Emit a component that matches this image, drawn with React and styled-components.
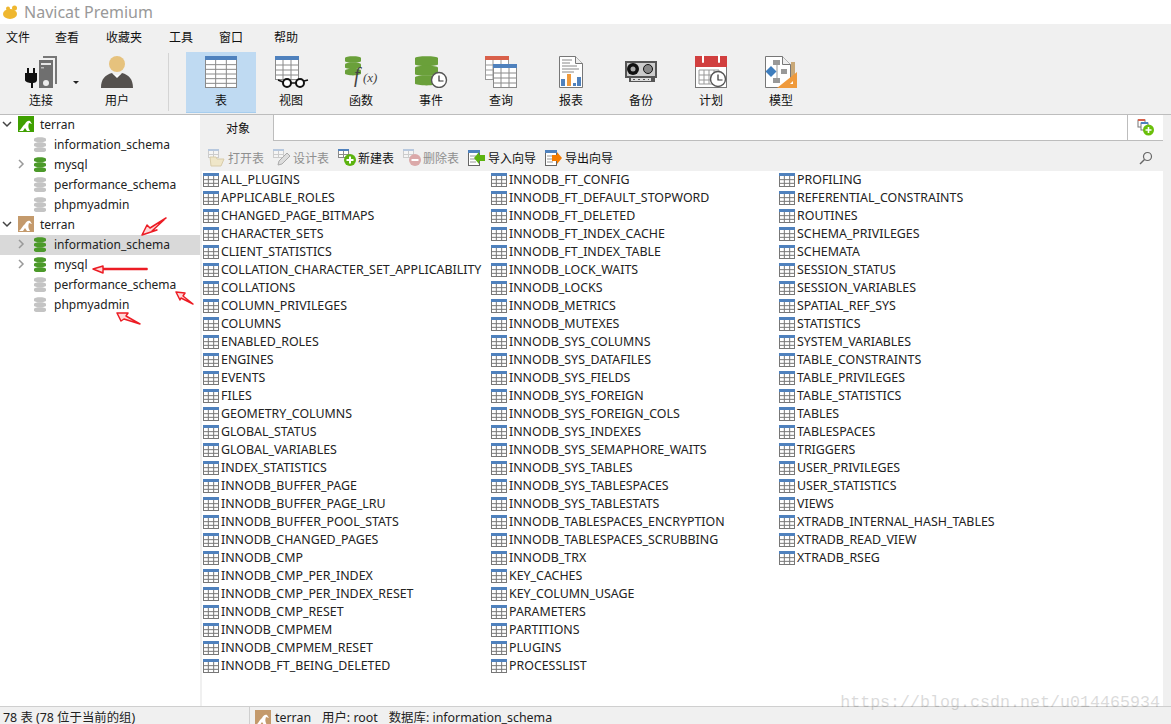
import React from 'react';
import styled, { createGlobalStyle } from 'styled-components';

const FONT = '"Noto Sans", "Noto Sans CJK SC", sans-serif';

const col1 = ['ALL_PLUGINS','APPLICABLE_ROLES','CHANGED_PAGE_BITMAPS','CHARACTER_SETS','CLIENT_STATISTICS','COLLATION_CHARACTER_SET_APPLICABILITY','COLLATIONS','COLUMN_PRIVILEGES','COLUMNS','ENABLED_ROLES','ENGINES','EVENTS','FILES','GEOMETRY_COLUMNS','GLOBAL_STATUS','GLOBAL_VARIABLES','INDEX_STATISTICS','INNODB_BUFFER_PAGE','INNODB_BUFFER_PAGE_LRU','INNODB_BUFFER_POOL_STATS','INNODB_CHANGED_PAGES','INNODB_CMP','INNODB_CMP_PER_INDEX','INNODB_CMP_PER_INDEX_RESET','INNODB_CMP_RESET','INNODB_CMPMEM','INNODB_CMPMEM_RESET','INNODB_FT_BEING_DELETED'];
const col2 = ['INNODB_FT_CONFIG','INNODB_FT_DEFAULT_STOPWORD','INNODB_FT_DELETED','INNODB_FT_INDEX_CACHE','INNODB_FT_INDEX_TABLE','INNODB_LOCK_WAITS','INNODB_LOCKS','INNODB_METRICS','INNODB_MUTEXES','INNODB_SYS_COLUMNS','INNODB_SYS_DATAFILES','INNODB_SYS_FIELDS','INNODB_SYS_FOREIGN','INNODB_SYS_FOREIGN_COLS','INNODB_SYS_INDEXES','INNODB_SYS_SEMAPHORE_WAITS','INNODB_SYS_TABLES','INNODB_SYS_TABLESPACES','INNODB_SYS_TABLESTATS','INNODB_TABLESPACES_ENCRYPTION','INNODB_TABLESPACES_SCRUBBING','INNODB_TRX','KEY_CACHES','KEY_COLUMN_USAGE','PARAMETERS','PARTITIONS','PLUGINS','PROCESSLIST'];
const col3 = ['PROFILING','REFERENTIAL_CONSTRAINTS','ROUTINES','SCHEMA_PRIVILEGES','SCHEMATA','SESSION_STATUS','SESSION_VARIABLES','SPATIAL_REF_SYS','STATISTICS','SYSTEM_VARIABLES','TABLE_CONSTRAINTS','TABLE_PRIVILEGES','TABLE_STATISTICS','TABLES','TABLESPACES','TRIGGERS','USER_PRIVILEGES','USER_STATISTICS','VIEWS','XTRADB_INTERNAL_HASH_TABLES','XTRADB_READ_VIEW','XTRADB_RSEG'];

const GlobalStyle = createGlobalStyle`
  html, body { margin: 0; padding: 0; background: #fff; }
  body { font-family: ${FONT}; font-size: 12px; color: #1a1a1a; overflow: hidden; }
`;

/* ---------- icons ---------- */

const Grid = ({ x, y, w, h, cols, rows, head = '#4f81bd', line = '#8a8a8a', headH = 4, fill = '#fff' }) => {
  const v = Array.from({ length: cols - 1 }, (_, i) => x + ((i + 1) * w) / cols);
  const hs = Array.from({ length: rows - 1 }, (_, i) => y + headH + ((i + 1) * (h - headH)) / rows);
  return (
    <g>
      <rect x={x + 0.5} y={y + 0.5} width={w - 1} height={h - 1} fill={fill} stroke={line} />
      <rect x={x} y={y} width={w} height={headH} fill={head} />
      {v.map((p) => <line key={p} x1={p} x2={p} y1={y + headH} y2={y + h} stroke={line} />)}
      {hs.map((p) => <line key={p} x1={x} x2={x + w} y1={p} y2={p} stroke={line} />)}
    </g>
  );
};

const Cylinder = ({ x, y, w, h, color }) => {
  const band = h / 3;
  return (
    <g fill={color}>
      {[0, 1, 2].map((i) => (
        <path
          key={i}
          d={`M${x} ${y + i * band + 2}c0-2.4 ${w}-2.4 ${w} 0v${band - 3.4}c0 2.4-${w} 2.4-${w} 0z`}
        />
      ))}
    </g>
  );
};

const Clock = ({ cx, cy, r }) => (
  <g>
    <circle cx={cx} cy={cy} r={r} fill="#fff" stroke="#555" strokeWidth="1.4" />
    <path d={`M${cx} ${cy - r + 3}V${cy + 1}H${cx + r - 3}`} fill="none" stroke="#333" strokeWidth="1.2" />
  </g>
);

const Big = ({ children }) => <svg width="36" height="36" viewBox="0 0 36 36">{children}</svg>;

const ConnectIcon = () => (
  <Big>
    <path d="M20 4h14v28h-2V6H20z" fill="#777" />
    <rect x="16" y="8" width="14" height="28" fill="#6f6f6f" />
    <rect x="18" y="11" width="10" height="2" fill="#e6e6e6" />
    <rect x="18" y="15" width="3" height="1.500" fill="#bbb" />
    <circle cx="23" cy="31" r="3" fill="#eee" />
    <path d="M4 16h2v5h4v-5h2v5h2v7c0 2-2 3-4 3v5H8v-5c-2 0-6-1-6-3v-7h2z" fill="#111" />
  </Big>
);

const UserIcon = () => (
  <Big>
    <circle cx="18" cy="12" r="8" fill="#e6c27d" />
    <path d="M2 36c0-9 4-13 11-15l5 4 5-4c7 2 11 6 11 15z" fill="#55514e" />
    <path d="M13 21l5 5 5-5-5 2.500z" fill="#fff" />
  </Big>
);

const TableBig = () => (
  <Big><Grid x={2} y={4} w={32} h={32} cols={3} rows={6} headH={4} /></Big>
);

const ViewIcon = () => (
  <Big>
    <Grid x={2} y={4} w={24} h={24} cols={3} rows={4} headH={4} />
    <circle cx="14" cy="31" r="4" fill="#fff" stroke="#111" strokeWidth="2" />
    <circle cx="27" cy="31" r="4" fill="#fff" stroke="#111" strokeWidth="2" />
    <path d="M5 28l5 2M18 31h5M31 29l4-1" stroke="#111" strokeWidth="1.500" />
  </Big>
);

const FuncIcon = () => (
  <Big>
    <Cylinder x={2} y={4} w={16} h={19} color="#6aa03a" />
    <text x="11" y="30" fontFamily="Liberation Serif, serif" fontStyle="italic" fontSize="20" fill="#444">f</text>
    <text x="20" y="30" fontFamily="Liberation Serif, serif" fontStyle="italic" fontSize="13" fill="#444">(x)</text>
  </Big>
);

const EventIcon = () => (
  <Big>
    <Cylinder x={2} y={4} w={23} h={29} color="#6aa03a" />
    <Clock cx={26} cy={28} r={7.500} />
  </Big>
);

const QueryIcon = () => (
  <Big>
    <Grid x={2} y={4} w={24} h={24} cols={3} rows={4} head="#d9604a" line="#999" />
    <Grid x={10} y={12} w={24} h={24} cols={3} rows={4} />
  </Big>
);

const ReportIcon = () => (
  <Big>
    <path d="M6.500 4.500h16l7 7v24h-23z" fill="#fff" stroke="#777" />
    <path d="M22.500 4.500v7h7" fill="#eee" stroke="#777" />
    <path d="M9 8h10M9 11h8M9 14h15M9 17h17M9 20h12" stroke="#888" />
    <rect x="8" y="27" width="4" height="7" fill="#4f81bd" />
    <rect x="14" y="22" width="4" height="12" fill="#ef9a3c" />
    <rect x="20" y="31" width="3" height="3" fill="#4f81bd" />
    <rect x="24" y="25" width="4" height="9" fill="#4f81bd" />
  </Big>
);

const BackupIcon = () => (
  <Big>
    <path d="M2 9h32v17l-2 0v4H6v-4l-4 0z" fill="#555" />
    <rect x="4" y="11" width="28" height="13" fill="#ccc" />
    <circle cx="10" cy="17" r="6" fill="#111" />
    <circle cx="10" cy="17" r="2.500" fill="#aaa" />
    <circle cx="25" cy="17" r="4.500" fill="#888" stroke="#111" />
    <rect x="8" y="26" width="20" height="3" fill="#ddd" />
    <path d="M10 27.500h16" stroke="#555" strokeDasharray="2 3" />
  </Big>
);

const PlanIcon = () => (
  <Big>
    <rect x="2.500" y="8" width="31" height="27.500" fill="#fff" stroke="#777" />
    <rect x="2" y="4" width="32" height="11" fill="#d13f3f" />
    <path d="M10 3v7M26 3v7" stroke="#fff" strokeWidth="2" strokeLinecap="round" />
    <path d="M6 18h20v14H6zM11 18v14M16 18v14M21 18v14M6 23h20M6 28h20" fill="none" stroke="#999" />
    <Clock cx={25} cy={27} r={7.500} />
  </Big>
);

const ModelIcon = () => (
  <Big>
    <path d="M2.500 4.500h17l8 8v23h-25z" fill="#fff" stroke="#777" />
    <path d="M19.500 4.500v8h8" fill="#eee" stroke="#777" />
    <path d="M14 9v18" stroke="#999" />
    <rect x="10" y="8" width="7" height="5" fill="#999" />
    <rect x="10" y="26" width="7" height="5" fill="#999" />
    <rect x="18" y="17" width="6" height="5" fill="#999" />
    <path d="M8 14l5.500 5.500L8 25l-5.500-5.500z" fill="#3e7dbd" />
    <rect x="28" y="10" width="4" height="16" fill="#c9a877" />
    <path d="M34 20v16H14z" fill="#ef9a3c" />
    <path d="M30 29v3h-3z" fill="#fff" />
  </Big>
);

const Db = ({ on }) => (
  <svg width="14" height="16" viewBox="0 0 14 16">
    <Cylinder x={1} y={1} w={12} h={15} color={on ? '#4c9a2a' : '#c4c4c4'} />
  </svg>
);

const Chevron = ({ open }) => (
  <svg width="10" height="10" viewBox="0 0 10 10">
    {open
      ? <path d="M1 3l4 4 4-4" fill="none" stroke="#444" strokeWidth="1.500" />
      : <path d="M3 1l4 4-4 4" fill="none" stroke="#999" strokeWidth="1.500" />}
  </svg>
);

const Dolphin = ({ bg, size = 16 }) => (
  <svg width={size} height={size} viewBox="0 0 16 16">
    <rect width="16" height="16" fill={bg} />
    <path d="M1 15c3-2 3-5 6-7 1-2 3-4 5-3l2 3-3-1c-1 3-1 5 1 8H9l-2-3-2 3z" fill="#fff" />
  </svg>
);

const Small = ({ children }) => <svg width="20" height="18" viewBox="0 0 20 18">{children}</svg>;

const Badge = ({ color, minus }) => (
  <g>
    <circle cx="13" cy="11" r="6" fill={color} />
    <path d={minus ? 'M9.500 11h7' : 'M9.500 11h7M13 7.500v7'} stroke="#fff" strokeWidth="2" />
  </g>
);

const OpenIcon = () => (
  <Small>
    <g opacity=".35"><Grid x={1} y={0} w={11} h={9} cols={2} rows={2} headH={2} /></g>
    <path d="M3 8h6l1 2h7l-3 7H4z" fill="#efe6c8" stroke="#d8ccaa" />
  </Small>
);
const DesignIcon = () => (
  <Small>
    <g opacity=".35"><Grid x={1} y={0} w={11} h={9} cols={2} rows={2} headH={2} /></g>
    <path d="M6 16l1-4 8-8 3 3-8 8z" fill="#ddd" stroke="#aaa" />
  </Small>
);
const NewIcon = () => (
  <Small>
    <Grid x={1} y={0} w={11} h={9} cols={2} rows={2} headH={2} />
    <Badge color="#5cb30f" />
  </Small>
);
const DeleteIcon = () => (
  <Small>
    <g opacity=".35"><Grid x={1} y={0} w={11} h={9} cols={2} rows={2} headH={2} /></g>
    <Badge color="#dba9a9" minus />
  </Small>
);
const WizardIcon = ({ color, flip }) => (
  <Small>
    <rect x="1.500" y="1.500" width="11" height="15" fill="#fff" stroke="#666" />
    <rect x="1" y="1" width="12" height="3" fill="#4f81bd" />
    <path d="M3 7h6M3 10h6M3 13h6" stroke="#999" />
    <path d={flip ? 'M8 6h5V3l5 6-5 6v-3H8z' : 'M18 6h-6V3L7 9l5 6v-3h6z'} fill={color} />
  </Small>
);

const SearchIcon = () => (
  <svg width="14" height="14" viewBox="0 0 14 14">
    <circle cx="8.500" cy="5.500" r="4" fill="none" stroke="#666" strokeWidth="1.200" />
    <path d="M5.500 8.500L1 13" stroke="#666" strokeWidth="1.400" />
  </svg>
);

const AddIcon = () => (
  <svg width="18" height="18" viewBox="0 0 18 18">
    <rect x="1" y="1" width="7" height="7" fill="#fff" stroke="#777" />
    <rect x="1" y="0" width="7" height="2" fill="#d9604a" />
    <rect x="4" y="4" width="7" height="7" fill="#fff" stroke="#777" />
    <rect x="4" y="3" width="7" height="2" fill="#4f81bd" />
    <circle cx="11.500" cy="11" r="5.500" fill="#6abf0a" />
    <path d="M8.500 11h6M11.500 8v6" stroke="#fff" strokeWidth="1.600" />
  </svg>
);

const RowIcon = () => (
  <svg width="16" height="14" viewBox="0 0 16 14">
    <Grid x={0} y={0} w={16} h={14} cols={3} rows={3} headH={3} line="#777" />
  </svg>
);

const Arrow = ({ d }) => (
  <path d={d} fill="#ffd9d9" stroke="#ec1c24" strokeWidth="1.500" strokeLinejoin="round" />
);

/* ---------- layout ---------- */

const Window = styled.div`
  position: relative;
  width: 1171px;
  height: 724px;
  display: flex;
  flex-direction: column;
  overflow: hidden;
  background: #f0f0f0;
`;

const TitleBar = styled.div`
  height: 24px;
  background: #fff;
  display: flex;
  align-items: center;
  gap: 6px;
  padding-left: 2px;
  font-size: 16px;
  color: #999;
`;

const MenuBar = styled.div`
  height: 26px;
  display: flex;
  align-items: center;
  padding-left: 6px;
`;

const MenuItem = styled.span`
  width: ${(p) => p.$w}px;
  font-size: 12px;
  color: #111;
`;

const Toolbar = styled.div`
  height: 65px;
  display: flex;
  align-items: flex-start;
  padding: 2px 0 0 6px;
  border-bottom: 1px solid #bdbdbd;
  box-sizing: border-box;
`;

const ToolButton = styled.div`
  width: 70px;
  height: 61px;
  display: flex;
  flex-direction: column;
  align-items: center;
  gap: 3px;
  box-sizing: border-box;
  font-size: 12px;
  color: #111;
  background: ${(p) => (p.$active ? '#bfdaf2' : 'transparent')};
  border-bottom: ${(p) => (p.$active ? '1px solid #a6cdee' : 'none')};
`;

const DropCaret = styled.span`
  width: 0;
  height: 0;
  margin: 29px 3px 0 -3px;
  border: 3px solid transparent;
  border-top: 3px solid #222;
  border-bottom: 0;
`;

const ToolSep = styled.div`
  width: 1px;
  height: 58px;
  background: #d4d4d4;
  margin: 1px 17px 0 16px;
`;

const Body = styled.div`
  flex: 1;
  display: flex;
  min-height: 0;
`;

const Sidebar = styled.div`
  width: 200px;
  flex-shrink: 0;
  background: #fff;
`;

const TreeRow = styled.div`
  height: 20px;
  display: flex;
  align-items: center;
  gap: ${(p) => (p.$root ? 6 : 7)}px;
  padding-left: ${(p) => (p.$root ? 2 : 16)}px;
  padding-bottom: 2px;
  box-sizing: border-box;
  font-size: 12px;
  color: #222;
  background: ${(p) => (p.$selected ? '#d9d9d9' : 'transparent')};
`;

const ChevronSlot = styled.span`
  width: 10px;
  height: 10px;
  display: flex;
  flex-shrink: 0;
  visibility: ${(p) => (p.$hidden ? 'hidden' : 'visible')};
`;

const Main = styled.div`
  flex: 1;
  display: flex;
  flex-direction: column;
  padding-right: 8px;
  min-width: 0;
`;

const TabRow = styled.div`
  height: 26px;
  display: flex;
  flex-shrink: 0;
`;

const Tab = styled.div`
  width: 73px;
  display: flex;
  align-items: center;
  justify-content: center;
  padding-left: 3px;
  box-sizing: border-box;
  font-size: 12px;
  color: #111;
`;

const TabFill = styled.div`
  flex: 1;
  background: #fff;
  border-left: 1px solid #bdbdbd;
  border-bottom: 1px solid #bdbdbd;
`;

const TabAction = styled.div`
  width: 36px;
  display: flex;
  align-items: center;
  justify-content: center;
  background: #fff;
  border-left: 1px solid #bdbdbd;
  border-bottom: 1px solid #bdbdbd;
  box-sizing: border-box;
`;

const ActionBar = styled.div`
  height: 30px;
  display: flex;
  align-items: center;
  gap: 8px;
  padding: 4px 10px 0 7px;
  box-sizing: border-box;
  flex-shrink: 0;
`;

const Action = styled.div`
  display: flex;
  align-items: center;
  gap: 1px;
  font-size: 12px;
  color: ${(p) => (p.$off ? '#8f8f8f' : '#111')};
`;

const SearchSlot = styled.div`
  margin-left: auto;
  display: flex;
`;

const ListPane = styled.div`
  flex: 1;
  background: #fff;
  margin-left: 2px;
  padding-left: 1px;
  display: grid;
  grid-auto-flow: column;
  grid-template-rows: repeat(28, 18px);
  grid-auto-columns: 288px;
  align-content: start;
`;

const Item = styled.div`
  display: flex;
  align-items: center;
  gap: 2px;
  padding-bottom: 1px;
  box-sizing: border-box;
  white-space: nowrap;
  font-size: 12.400px;
  color: #222;
`;

const StatusBar = styled.div`
  height: 18px;
  display: flex;
  border-top: 1px solid #cfcfcf;
  box-sizing: border-box;
  overflow: hidden;
  font-size: 12.400px;
  line-height: 22px;
  color: #222;
  flex-shrink: 0;
`;

const StatusLeft = styled.div`
  width: 250px;
  padding-left: 3px;
  box-sizing: border-box;
  border-right: 1px solid #cfcfcf;
`;

const StatusRight = styled.div`
  display: flex;
  align-items: flex-start;
  gap: 11px;
  padding-left: 5px;
`;

const StatusConn = styled.span`
  display: flex;
  gap: 4px;
  & > svg { margin-top: 3px; }
`;

const Watermark = styled.div`
  position: absolute;
  right: 11px;
  top: 693px;
  font-family: "Liberation Mono", monospace;
  font-size: 16.670px;
  color: #000;
  opacity: 0.14;
  white-space: nowrap;
`;

const ArrowLayer = styled.svg`
  position: absolute;
  left: 0;
  top: 0;
  pointer-events: none;
`;

const tools = [
  ['表', <TableBig key="a" />, true],
  ['视图', <ViewIcon key="b" />],
  ['函数', <FuncIcon key="c" />],
  ['事件', <EventIcon key="d" />],
  ['查询', <QueryIcon key="e" />],
  ['报表', <ReportIcon key="f" />],
  ['备份', <BackupIcon key="g" />],
  ['计划', <PlanIcon key="h" />],
  ['模型', <ModelIcon key="i" />],
];

const menus = [['文件', 49], ['查看', 51], ['收藏夹', 63], ['工具', 50], ['窗口', 55], ['帮助', 30]];

const Tree = ({ bg, selected, active }) => (
  <>
    <TreeRow $root>
      <ChevronSlot><Chevron open /></ChevronSlot>
      <Dolphin bg={bg} />
      <span>terran</span>
    </TreeRow>
    {['information_schema', 'mysql', 'performance_schema', 'phpmyadmin'].map((name) => (
      <TreeRow key={name} $selected={selected === name}>
        <ChevronSlot $hidden={!active.includes(name)}><Chevron /></ChevronSlot>
        <Db on={active.includes(name)} />
        <span>{name}</span>
      </TreeRow>
    ))}
  </>
);

export default function App() {
  return (
    <Window>
      <GlobalStyle />
      <TitleBar>
        <svg width="16" height="16" viewBox="0 0 16 16">
          <ellipse cx="8" cy="10" rx="7" ry="5" fill="#efb72f" />
          <circle cx="12.500" cy="4" r="2.500" fill="#efb72f" />
          <circle cx="6" cy="4.500" r="2" fill="#efb72f" />
        </svg>
        Navicat Premium
      </TitleBar>
      <MenuBar>
        {menus.map(([t, w]) => <MenuItem key={t} $w={w}>{t}</MenuItem>)}
      </MenuBar>
      <Toolbar>
        <ToolButton><ConnectIcon />连接</ToolButton>
        <DropCaret />
        <ToolButton><UserIcon />用户</ToolButton>
        <ToolSep />
        {tools.map(([label, icon, active]) => (
          <ToolButton key={label} $active={active}>{icon}{label}</ToolButton>
        ))}
      </Toolbar>
      <Body>
        <Sidebar>
          <Tree bg="#3fa000" active={['mysql']} />
          <Tree bg="#c49a6c" selected="information_schema" active={['information_schema', 'mysql']} />
        </Sidebar>
        <Main>
          <TabRow>
            <Tab>对象</Tab>
            <TabFill />
            <TabAction><AddIcon /></TabAction>
          </TabRow>
          <ActionBar>
            <Action $off><OpenIcon />打开表</Action>
            <Action $off><DesignIcon />设计表</Action>
            <Action><NewIcon />新建表</Action>
            <Action $off><DeleteIcon />删除表</Action>
            <Action><WizardIcon color="#5cb30f" />导入向导</Action>
            <Action><WizardIcon color="#f57c00" flip />导出向导</Action>
            <SearchSlot><SearchIcon /></SearchSlot>
          </ActionBar>
          <ListPane>
            {[...col1, ...col2, ...col3].map((name) => (
              <Item key={name}><RowIcon />{name}</Item>
            ))}
          </ListPane>
        </Main>
      </Body>
      <StatusBar>
        <StatusLeft>78 表 (78 位于当前的组)</StatusLeft>
        <StatusRight>
          <StatusConn><Dolphin bg="#c49a6c" />terran</StatusConn>
          <span>用户: root</span>
          <span>数据库: information_schema</span>
        </StatusRight>
      </StatusBar>
      <Watermark>https://blog.csdn.net/u014465934</Watermark>
      <ArrowLayer width="1171" height="724">
        <Arrow d="M142 235L147 225L150 228L166 218L152 231L157 230Z" />
        <Arrow d="M93 269L103 266V268.500H147V269.500H103V273Z" />
        <Arrow d="M176 292L185 293L183 296L193 304L181 298L180 300Z" />
        <Arrow d="M117 313L128 313L126 316L140 324L124 319L121 321Z" />
      </ArrowLayer>
    </Window>
  );
}
